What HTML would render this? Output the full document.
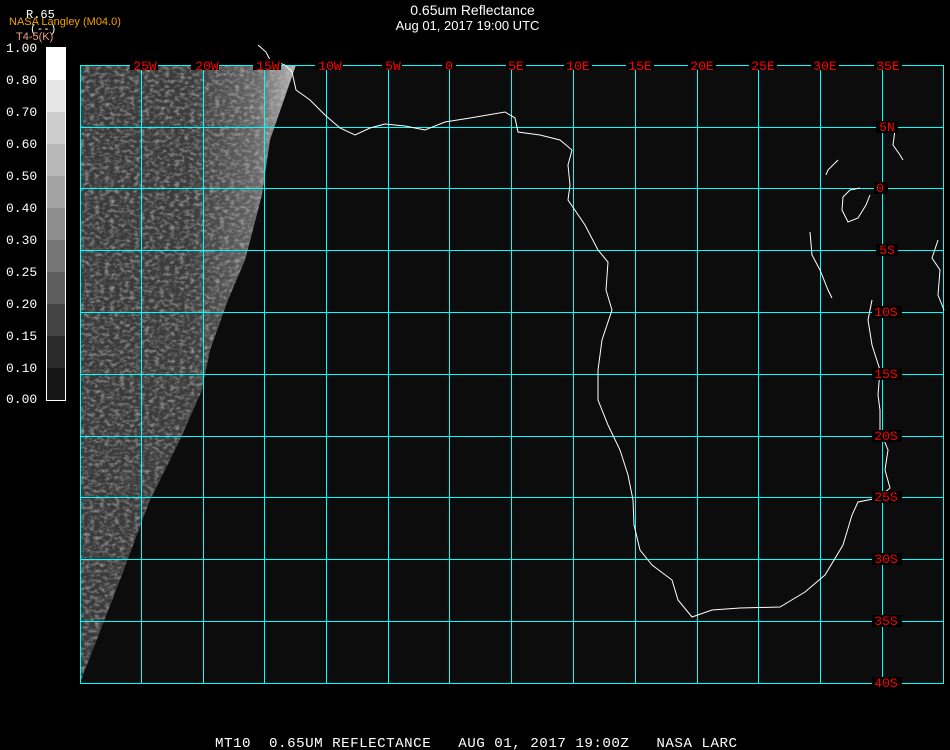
<!DOCTYPE html>
<html><head><style>
body{margin:0;background:#000;width:950px;height:750px;overflow:hidden;position:relative;font-family:"Liberation Sans",sans-serif}
.t{position:absolute;color:#fff;font-size:14px;white-space:nowrap}
.m{position:absolute;font-family:"Liberation Mono",monospace;white-space:nowrap}
</style></head><body>
<div class="t" style="left:0;width:945px;text-align:center;top:2px;font-size:14px">0.65um Reflectance</div>
<div class="t" style="left:0;width:935px;text-align:center;top:18px;font-size:13px">Aug 01, 2017 19:00 UTC</div>
<div class="m" style="left:26px;top:8px;color:#fff;font-size:12px">R.65</div>
<div class="m" style="left:30px;top:24px;color:#fff;font-size:11px">(--)</div>
<div class="t" style="left:9px;top:16px;color:#f4a000;font-size:11px">NASA Langley (M04.0)</div>
<div class="t" style="left:16px;top:31px;color:#f0a080;font-size:11px">T4-5(K)</div>
<svg width="950" height="750" style="position:absolute;left:0;top:0">
<defs>
<filter id="n" x="0" y="0" width="100%" height="100%">
<feTurbulence type="fractalNoise" baseFrequency="0.2 0.3" numOctaves="3" seed="4"/>
<feColorMatrix type="matrix" values="0 0 0 0 0.6  0 0 0 0 0.6  0 0 0 0 0.6  0 0 0 1.4 -0.6"/>
</filter>
<linearGradient id="g" gradientUnits="userSpaceOnUse" x1="80" y1="0" x2="300" y2="0">
<stop offset="0" stop-color="#3a3a3a"/><stop offset="0.5" stop-color="#3c3c3c"/><stop offset="0.8" stop-color="#666"/><stop offset="1" stop-color="#bbb"/>
</linearGradient>
<clipPath id="c"><polygon points="80,65 296,65 270,140 262,195 245,260 228,300 210,350 202,390 180,440 150,500 120,580 80,683"/></clipPath>
</defs>
<rect x="80" y="65" width="864" height="618" fill="#0c0c0c"/>
<g clip-path="url(#c)">
<rect x="80" y="65" width="220" height="620" fill="url(#g)"/>
<rect x="80" y="65" width="220" height="620" filter="url(#n)" fill="#fff"/>
</g>
<g stroke="#0ff" stroke-width="1" fill="none">
<path d="M80.5,65V683M141.5,65V683M203.5,65V683M264.5,65V683M326.5,65V683M388.5,65V683M449.5,65V683M511.5,65V683M573.5,65V683M635.5,65V683M697.5,65V683M758.5,65V683M820.5,65V683M882.5,65V683M943.5,65V683"/>
<path d="M80,65.5H944M80,127.5H944M80,188.5H944M80,250.5H944M80,312.5H944M80,374.5H944M80,436.5H944M80,497.5H944M80,559.5H944M80,621.5H944M80,683.5H944"/>
</g>
<g fill="none" stroke="#fff" stroke-width="1">
<polyline points="258,45 266,52 270,60 285,65 292,72 296,90 310,100 325,115 340,128 355,135 370,128 385,124 405,126 425,130 445,122 470,118 505,112 515,118 518,132 540,135 560,140 572,150 568,165 570,185 568,200 585,225 598,250 608,262 606,290 612,310 602,340 598,370 598,400 608,425 620,450 628,475 633,500 634,525 640,550 652,565 672,580 678,600 692,617 712,610 740,608 780,607 805,592 825,575 843,545 852,515 858,502 878,498 890,488 885,470 888,450 880,430 880,410 878,395 880,370 872,345 868,320 872,300"/>
<polyline points="938,240 932,258 940,270 938,295 944,310"/>
<polyline points="810,232 812,255 820,270 828,290 832,298"/>
<polyline points="895,130 893,145 900,155 903,160"/>
<polyline points="838,160 828,170 826,175"/>
<polyline points="860,188 850,190 843,197 842,210 848,222 858,218 866,205 870,195"/>
</g>
<rect x="46.5" y="47.5" width="19" height="353" fill="#111" stroke="#fff"/>
<rect x="47" y="48" width="18" height="32" fill="#fff"/>
<rect x="47" y="80" width="18" height="32" fill="#e6e6e6"/>
<rect x="47" y="112" width="18" height="32" fill="#cccccc"/>
<rect x="47" y="144" width="18" height="32" fill="#b8b8b8"/>
<rect x="47" y="176" width="18" height="32" fill="#a2a2a2"/>
<rect x="47" y="208" width="18" height="32" fill="#8e8e8e"/>
<rect x="47" y="240" width="18" height="32" fill="#767676"/>
<rect x="47" y="272" width="18" height="32" fill="#5e5e5e"/>
<rect x="47" y="304" width="18" height="32" fill="#444"/>
<rect x="47" y="336" width="18" height="32" fill="#2a2a2a"/>
<rect x="47" y="368" width="18" height="32" fill="#151515"/>
<g font-family="Liberation Mono,monospace" font-size="13" fill="#fff">
<text x="6" y="52">1.00</text><text x="6" y="84">0.80</text><text x="6" y="116">0.70</text><text x="6" y="148">0.60</text><text x="6" y="180">0.50</text><text x="6" y="212">0.40</text><text x="6" y="244">0.30</text><text x="6" y="276">0.25</text><text x="6" y="308">0.20</text><text x="6" y="340">0.15</text><text x="6" y="372">0.10</text><text x="6" y="403">0.00</text>
</g>
<g font-family="Liberation Mono,monospace" font-size="13" fill="#f00" text-anchor="middle">
<g fill="#000"><rect x="130" y="59" width="28" height="11"/><rect x="191" y="59" width="28" height="11"/><rect x="253" y="59" width="28" height="11"/><rect x="315" y="59" width="28" height="11"/><rect x="382" y="59" width="20" height="11"/><rect x="442" y="59" width="14" height="11"/><rect x="506" y="59" width="20" height="11"/><rect x="564" y="59" width="28" height="11"/><rect x="626" y="59" width="28" height="11"/><rect x="688" y="59" width="28" height="11"/><rect x="749" y="59" width="28" height="11"/><rect x="811" y="59" width="28" height="11"/><rect x="874" y="59" width="28" height="11"/>
<rect x="876" y="121" width="22" height="12"/><rect x="874" y="182" width="14" height="12"/><rect x="876" y="244" width="22" height="12"/><rect x="872" y="306" width="30" height="12"/><rect x="872" y="368" width="30" height="12"/><rect x="872" y="430" width="30" height="12"/><rect x="872" y="491" width="30" height="12"/><rect x="872" y="553" width="30" height="12"/><rect x="872" y="615" width="30" height="12"/><rect x="872" y="677" width="30" height="12"/></g>
<text x="145" y="70">25W</text><text x="207" y="70">20W</text><text x="268" y="70">15W</text><text x="330" y="70">10W</text><text x="393" y="70">5W</text><text x="449" y="70">0</text><text x="516" y="70">5E</text><text x="578" y="70">10E</text><text x="640" y="70">15E</text><text x="702" y="70">20E</text><text x="763" y="70">25E</text><text x="825" y="70">30E</text><text x="888" y="70">35E</text>
<text x="887" y="131">5N</text><text x="880" y="192">0</text><text x="887" y="254">5S</text><text x="886" y="316">10S</text><text x="886" y="378">15S</text><text x="886" y="440">20S</text><text x="886" y="501">25S</text><text x="886" y="563">30S</text><text x="886" y="625">35S</text><text x="886" y="687">40S</text>
</g>
<text x="215" y="747" font-family="Liberation Mono,monospace" font-size="14.2" textLength="522" fill="#fff" xml:space="preserve">MT10  0.65UM REFLECTANCE   AUG 01, 2017 19:00Z   NASA LARC</text>
</svg>
</body></html>
